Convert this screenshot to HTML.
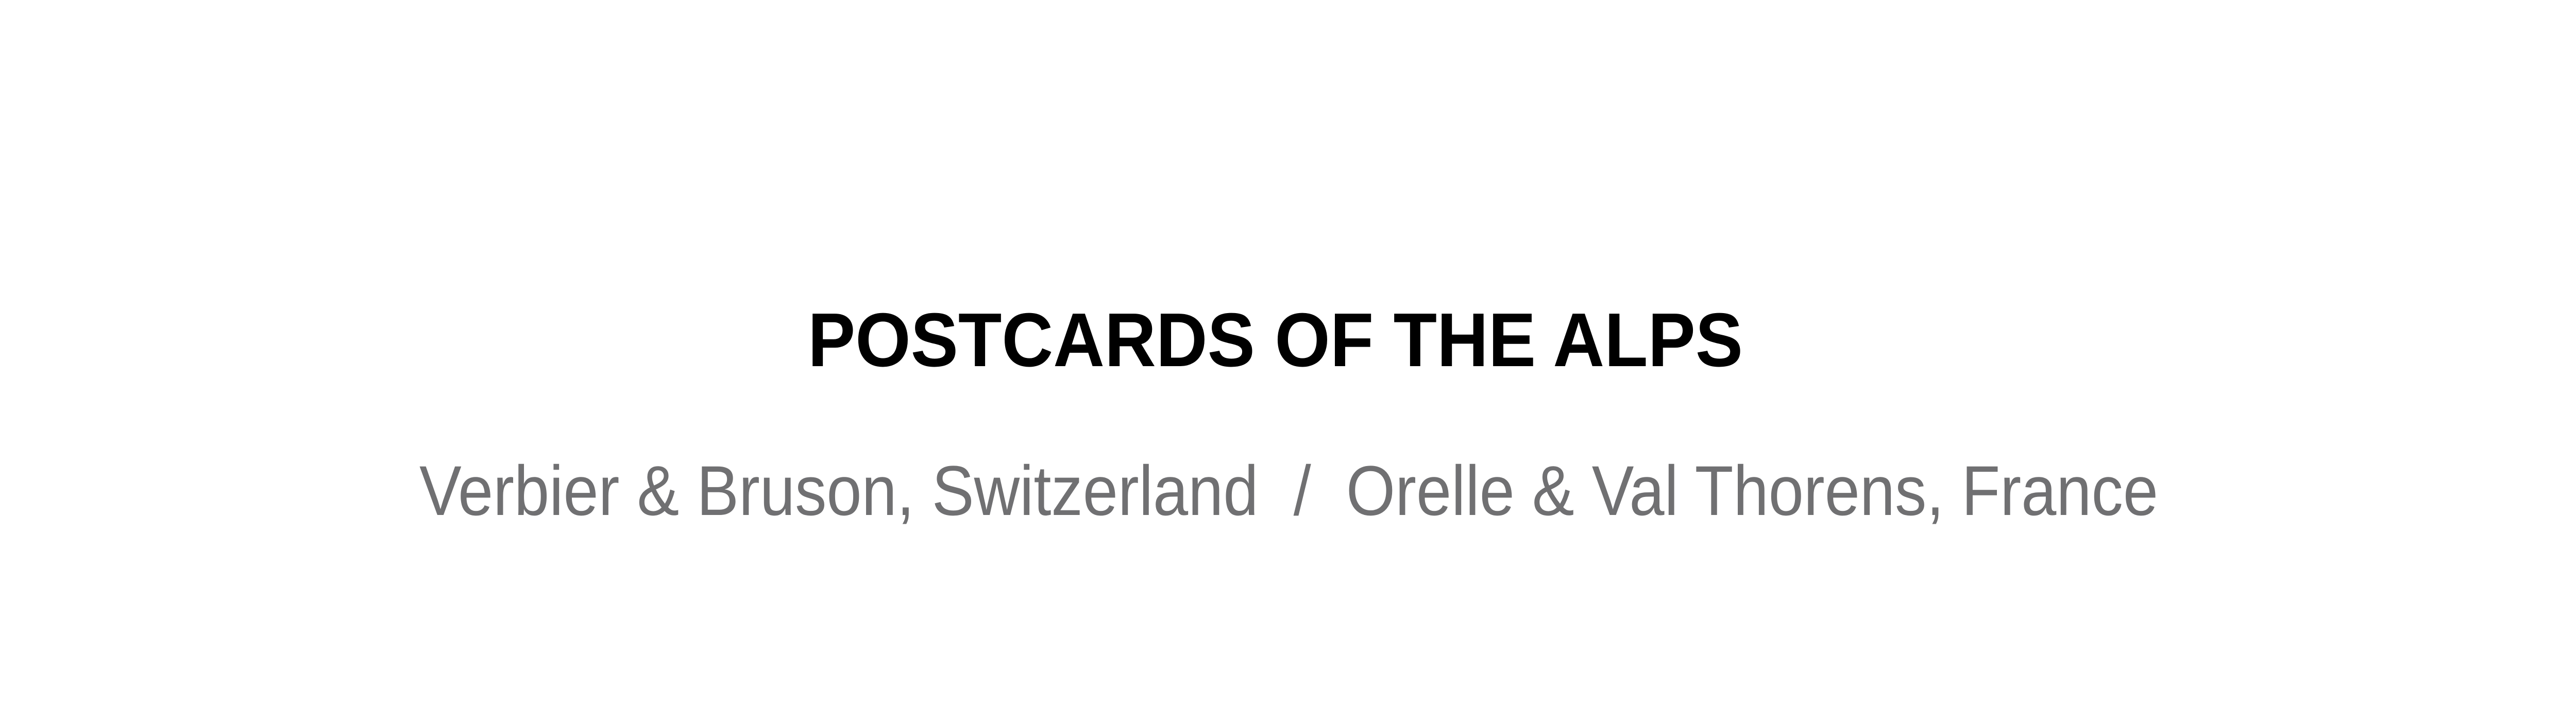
<!DOCTYPE html>
<html><head><meta charset="utf-8"><style>
html,body{margin:0;padding:0;background:#fff;width:5100px;height:1369px;overflow:hidden}
</style></head><body>
<svg width="5100" height="1369" xmlns="http://www.w3.org/2000/svg" style="display:block">
<rect width="5100" height="1369" fill="#fff"/>
<text x="1568" y="711" font-family="Liberation Sans, sans-serif" font-weight="bold" font-size="148" fill="#000" textLength="1815" lengthAdjust="spacingAndGlyphs">POSTCARDS OF THE ALPS</text>
<text x="814" y="1000" font-family="Liberation Sans, sans-serif" font-size="137" fill="#707072" textLength="3375" lengthAdjust="spacingAndGlyphs" xml:space="preserve">Verbier &amp; Bruson, Switzerland  /  Orelle &amp; Val Thorens, France</text>
</svg>
</body></html>
